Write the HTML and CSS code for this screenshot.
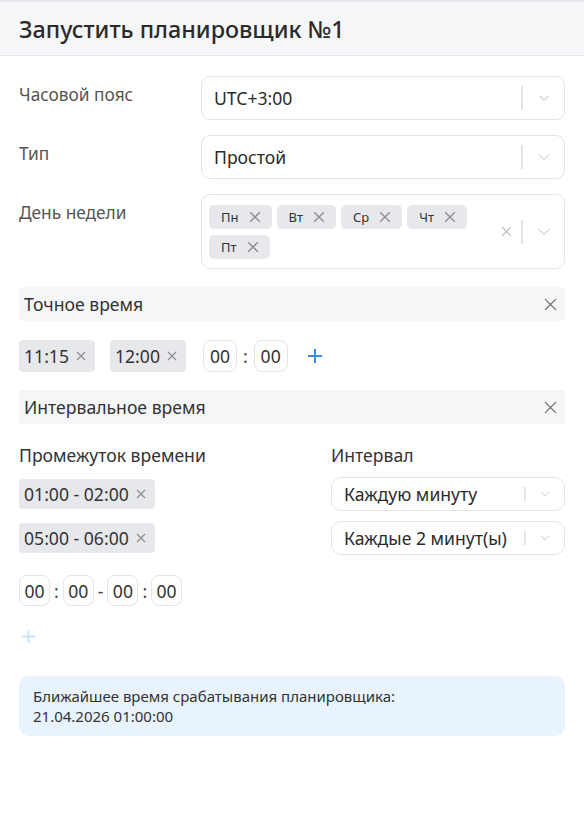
FILE: index.html
```html
<!DOCTYPE html>
<html lang="ru">
<head>
    <meta charset="UTF-8">
    <meta name="viewport" content="width=device-width, initial-scale=1.0">
    <title>Запустить планировщик</title>
    <link rel="stylesheet" href="styles.css">
</head>
<body>

<!-- Header -->
<div class="modal-header">Запустить планировщик №1</div>

<div class="modal-body">

    <!-- Form rows -->
    <div class="form-row">
        <div class="form-label">Часовой пояс</div>
        <div class="select">
            <span class="select-value">UTC+3:00</span>
            <span class="select-divider"></span>
            <svg class="chevron" viewBox="0 0 12 8"><path d="M1 1.5 6 6.5 11 1.5"/></svg>
        </div>
    </div>

    <div class="form-row">
        <div class="form-label">Тип</div>
        <div class="select">
            <span class="select-value">Простой</span>
            <span class="select-divider"></span>
            <svg class="chevron" viewBox="0 0 12 8"><path d="M1 1.5 6 6.5 11 1.5"/></svg>
        </div>
    </div>

    <div class="form-row">
        <div class="form-label">День недели</div>
        <div class="select select-multi">
            <div class="tags">
                <span class="tag">Пн <svg class="x" viewBox="0 0 10 10"><path d="M1 1 9 9M9 1 1 9"/></svg></span>
                <span class="tag">Вт <svg class="x" viewBox="0 0 10 10"><path d="M1 1 9 9M9 1 1 9"/></svg></span>
                <span class="tag">Ср <svg class="x" viewBox="0 0 10 10"><path d="M1 1 9 9M9 1 1 9"/></svg></span>
                <span class="tag">Чт <svg class="x" viewBox="0 0 10 10"><path d="M1 1 9 9M9 1 1 9"/></svg></span>
                <span class="tag">Пт <svg class="x" viewBox="0 0 10 10"><path d="M1 1 9 9M9 1 1 9"/></svg></span>
            </div>
            <svg class="clear" viewBox="0 0 10 10"><path d="M1 1 9 9M9 1 1 9"/></svg>
            <span class="select-divider"></span>
            <svg class="chevron" viewBox="0 0 12 8"><path d="M1 1.5 6 6.5 11 1.5"/></svg>
        </div>
    </div>

    <!-- Exact time -->
    <div class="section-bar">
        <span>Точное время</span>
        <svg class="close" viewBox="0 0 12 12"><path d="M1 1 11 11M11 1 1 11"/></svg>
    </div>

    <div class="time-row">
        <span class="chip">11:15 <svg class="x" viewBox="0 0 10 10"><path d="M1 1 9 9M9 1 1 9"/></svg></span>
        <span class="chip">12:00 <svg class="x" viewBox="0 0 10 10"><path d="M1 1 9 9M9 1 1 9"/></svg></span>
        <div class="time-input">
            <span class="num-box">00</span>
            <span class="sep">:</span>
            <span class="num-box">00</span>
        </div>
        <svg class="plus" viewBox="0 0 16 16"><path d="M8 1v14M1 8h14"/></svg>
    </div>

    <!-- Interval time -->
    <div class="section-bar">
        <span>Интервальное время</span>
        <svg class="close" viewBox="0 0 12 12"><path d="M1 1 11 11M11 1 1 11"/></svg>
    </div>

    <div class="interval-grid">
        <div class="col-title">Промежуток времени</div>
        <div class="col-title">Интервал</div>

        <div class="cell"><span class="chip chip-sm">01:00 - 02:00 <svg class="x" viewBox="0 0 10 10"><path d="M1 1 9 9M9 1 1 9"/></svg></span></div>
        <div class="select select-sm">
            <span class="select-value">Каждую минуту</span>
            <span class="select-divider"></span>
            <svg class="chevron" viewBox="0 0 12 8"><path d="M1 1.5 6 6.5 11 1.5"/></svg>
        </div>

        <div class="cell"><span class="chip chip-sm">05:00 - 06:00 <svg class="x" viewBox="0 0 10 10"><path d="M1 1 9 9M9 1 1 9"/></svg></span></div>
        <div class="select select-sm">
            <span class="select-value">Каждые 2 минут(ы)</span>
            <span class="select-divider"></span>
            <svg class="chevron" viewBox="0 0 12 8"><path d="M1 1.5 6 6.5 11 1.5"/></svg>
        </div>
    </div>

    <div class="time-input range-input">
        <span class="num-box">00</span>
        <span class="sep">:</span>
        <span class="num-box">00</span>
        <span class="sep">-</span>
        <span class="num-box">00</span>
        <span class="sep">:</span>
        <span class="num-box">00</span>
    </div>

    <svg class="plus plus-disabled" viewBox="0 0 16 16"><path d="M8 1v14M1 8h14"/></svg>

    <!-- Next run info -->
    <div class="info-box">
        Ближайшее время срабатывания планировщика:<br>
        21.04.2026 01:00:00
    </div>

</div>

</body>
</html>
```

FILE: styles.css
```css
body {
    font-family: "Noto Sans", "Open Sans", sans-serif;
    margin: 0;
    padding: 0;
    color: #333;
    background: #fff;
}

/* Header */
.modal-header {
    background: #f5f6f8;
    border-top: 2px solid #e4e5e8;
    border-bottom: 1px solid #e4e5e8;
    height: 53px;
    padding: 0 19px;
    display: flex;
    align-items: center;
    font-size: 23.3px;
    font-weight: 500;
    color: #2b2b2b;
}

.modal-body {
    padding: 20px 19px 0;
}

/* Form rows */
.form-row {
    display: flex;
    align-items: flex-start;
    margin-bottom: 15px;
}

.form-label {
    width: 182px;
    padding-top: 7px;
    font-size: 17.3px;
    line-height: 24px;
    color: #555;
}

.select {
    flex: 1;
    height: 44px;
    box-sizing: border-box;
    border: 1px solid #e3e4e7;
    border-radius: 9px;
    display: flex;
    align-items: center;
    padding: 0 14px 0 12px;
}

.select-value {
    flex: 1;
    font-size: 17.6px;
    color: #2b2b2b;
}

.select-divider {
    width: 2px;
    height: 24px;
    background: #e4e5e8;
    margin-right: 15px;
}

.chevron {
    width: 12px;
    height: 8px;
    fill: none;
    stroke: #b5b7bc;
    stroke-width: 1;
}

.select-multi {
    height: 75px;
    padding: 0 14px 0 7px;
}

.tags {
    flex: 1;
    display: flex;
    flex-wrap: wrap;
    gap: 6px 5px;
    align-content: center;
    padding-right: 30px;
}

.tag {
    height: 24px;
    padding: 0 11px 0 12px;
    background: #e7e8eb;
    border-radius: 5px;
    display: inline-flex;
    align-items: center;
    gap: 10px;
    font-size: 13px;
    color: #333;
}

.tag .x {
    width: 12px;
    height: 12px;
}

.x,
.clear,
.close {
    fill: none;
    stroke: #8a8c91;
    stroke-width: 1.1;
}

.clear {
    width: 11px;
    height: 11px;
    stroke: #b9bbc0;
    margin-right: 9px;
}

/* Section bars */
.section-bar {
    background: #f5f6f8;
    height: 34px;
    border-radius: 3px;
    display: flex;
    align-items: center;
    justify-content: space-between;
    padding: 0 8px 0 5px;
    font-size: 17.6px;
    color: #333;
    margin-top: 18px;
}

.section-bar .close {
    width: 13px;
    height: 13px;
    stroke: #666;
}

/* Time chips */
.time-row {
    display: flex;
    align-items: center;
    gap: 15px;
    margin: 19px 0 14px;
}

.chip {
    height: 32px;
    padding: 0 9px 0 5px;
    background: #e7e8eb;
    border-radius: 4px;
    display: inline-flex;
    align-items: center;
    gap: 7px;
    font-size: 17.6px;
    color: #333;
}

.chip .x {
    width: 10px;
    height: 10px;
}

.time-input {
    display: flex;
    align-items: center;
    gap: 6px;
    margin-left: 2px;
}

.num-box {
    height: 32px;
    min-width: 34px;
    box-sizing: border-box;
    border: 1px solid #e3e4e7;
    border-radius: 8px;
    display: inline-flex;
    align-items: center;
    justify-content: center;
    font-size: 17.6px;
    color: #333;
}

.sep {
    font-size: 17.6px;
    color: #444;
}

.plus {
    width: 16px;
    height: 16px;
    fill: none;
    stroke: #3a8ee6;
    stroke-width: 2;
    margin-left: 4px;
}

/* Interval grid */
.interval-grid {
    display: grid;
    grid-template-columns: 312px 1fr;
    row-gap: 10px;
    align-items: center;
    margin-top: 20px;
}

.col-title {
    font-size: 17.6px;
    line-height: 23px;
    color: #333;
}

.chip-sm {
    height: 30px;
    padding-right: 9px;
}

.select-sm {
    height: 34px;
    border-radius: 10px;
    padding: 0 14px 0 12px;
}

.select-sm .select-divider {
    height: 14px;
    margin-right: 14px;
}

.select-sm .chevron {
    width: 10px;
    height: 6px;
}

.range-input {
    margin: 20px 0 0;
    gap: 4px;
}

.range-input .num-box {
    min-width: 31px;
    height: 31px;
}

.plus-disabled {
    display: block;
    stroke: #cce3f9;
    margin: 23px 0 0 2px;
    width: 15px;
    height: 15px;
}

/* Info box */
.info-box {
    background: #e8f3fe;
    border-radius: 10px;
    padding: 10px 14px 10px;
    margin-top: 32px;
    font-size: 15px;
    line-height: 20px;
    color: #333;
}
```
